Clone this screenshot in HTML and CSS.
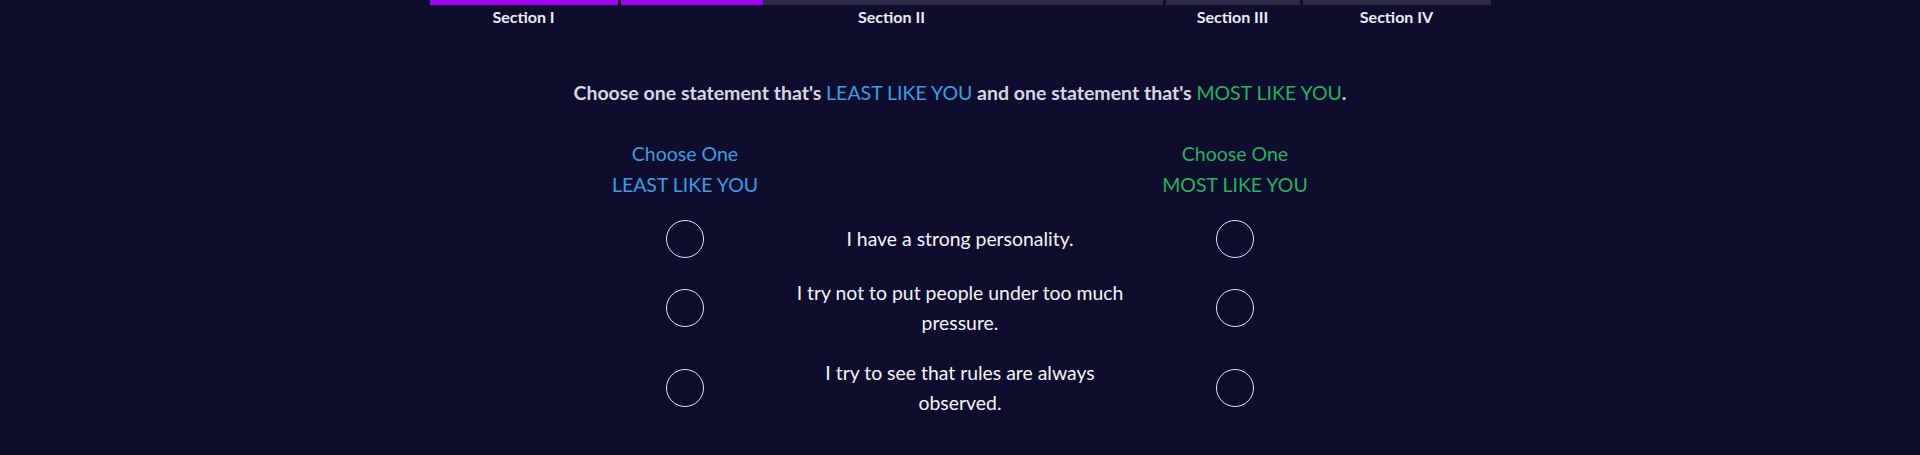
FILE: index.html
```html
<!DOCTYPE html>
<html lang="en">
<head>
<meta charset="utf-8">
<title>Assessment</title>
<link rel="stylesheet" href="styles.css">
</head>
<body>
<div class="progress">
  <div class="seg">
    <div class="bar"><div class="fill" style="width:100%"></div></div>
    <div class="seg-label">Section I</div>
  </div>
  <div class="seg">
    <div class="bar"><div class="fill" style="width:26.3%"></div></div>
    <div class="seg-label">Section II</div>
  </div>
  <div class="seg">
    <div class="bar"><div class="fill" style="width:0%"></div></div>
    <div class="seg-label">Section III</div>
  </div>
  <div class="seg">
    <div class="bar"><div class="fill" style="width:0%"></div></div>
    <div class="seg-label">Section IV</div>
  </div>
</div>

<h1 class="prompt">Choose one statement that's <span class="least key">LEAST LIKE YOU</span> and one statement that's <span class="most key">MOST LIKE YOU</span>.</h1>

<div class="choices">
  <div class="col-head least">Choose One<br>LEAST LIKE YOU</div>
  <div class="col-spacer"></div>
  <div class="col-head most">Choose One<br>MOST LIKE YOU</div>

  <button class="radio" aria-label="Least like you"></button>
  <div class="statement">I have a strong personality.</div>
  <button class="radio" aria-label="Most like you"></button>

  <button class="radio" aria-label="Least like you"></button>
  <div class="statement">I try not to put people under too much pressure.</div>
  <button class="radio" aria-label="Most like you"></button>

  <button class="radio" aria-label="Least like you"></button>
  <div class="statement">I try to see that rules are always observed.</div>
  <button class="radio" aria-label="Most like you"></button>
</div>
</body>
</html>
```

FILE: styles.css
```css
html, body {
  margin: 0;
  padding: 0;
  background: #0f0d2e;
  height: 100%;
}

body {
  font-family: "Lato", "Liberation Sans", sans-serif;
  color: #f2f2f7;
}

.progress {
  display: grid;
  grid-template-columns: 188px 542px 134px 188px;
  column-gap: 3px;
  justify-content: center;
}

.bar {
  height: 5px;
  background: #2c2a47;
}

.fill {
  height: 100%;
  background: #a100f2;
}

.seg-label {
  text-align: center;
  font-size: 16px;
  font-weight: 700;
  line-height: 23px;
  color: #ecebf3;
}

.prompt {
  margin: 50px 0 0;
  text-align: center;
  font-size: 19.5px;
  font-weight: 700;
  line-height: 30px;
  color: #d6d6e4;
}

.prompt .key {
  font-weight: 400;
}

.least { color: #3e9de2; }
.most { color: #25b35f; }

.choices {
  display: grid;
  grid-template-columns: 210px 340px 210px;
  justify-content: center;
  align-items: center;
  row-gap: 20px;
  margin-top: 30px;
}

.col-head {
  text-align: center;
  font-size: 19.5px;
  line-height: 31px;
}

.statement {
  text-align: center;
  font-size: 19.4px;
  line-height: 30px;
  color: #f4f4f8;
}

.radio {
  justify-self: center;
  width: 38px;
  height: 38px;
  padding: 0;
  border: 1.5px solid #e4e4ee;
  border-radius: 50%;
  background: transparent;
  cursor: pointer;
}
```
